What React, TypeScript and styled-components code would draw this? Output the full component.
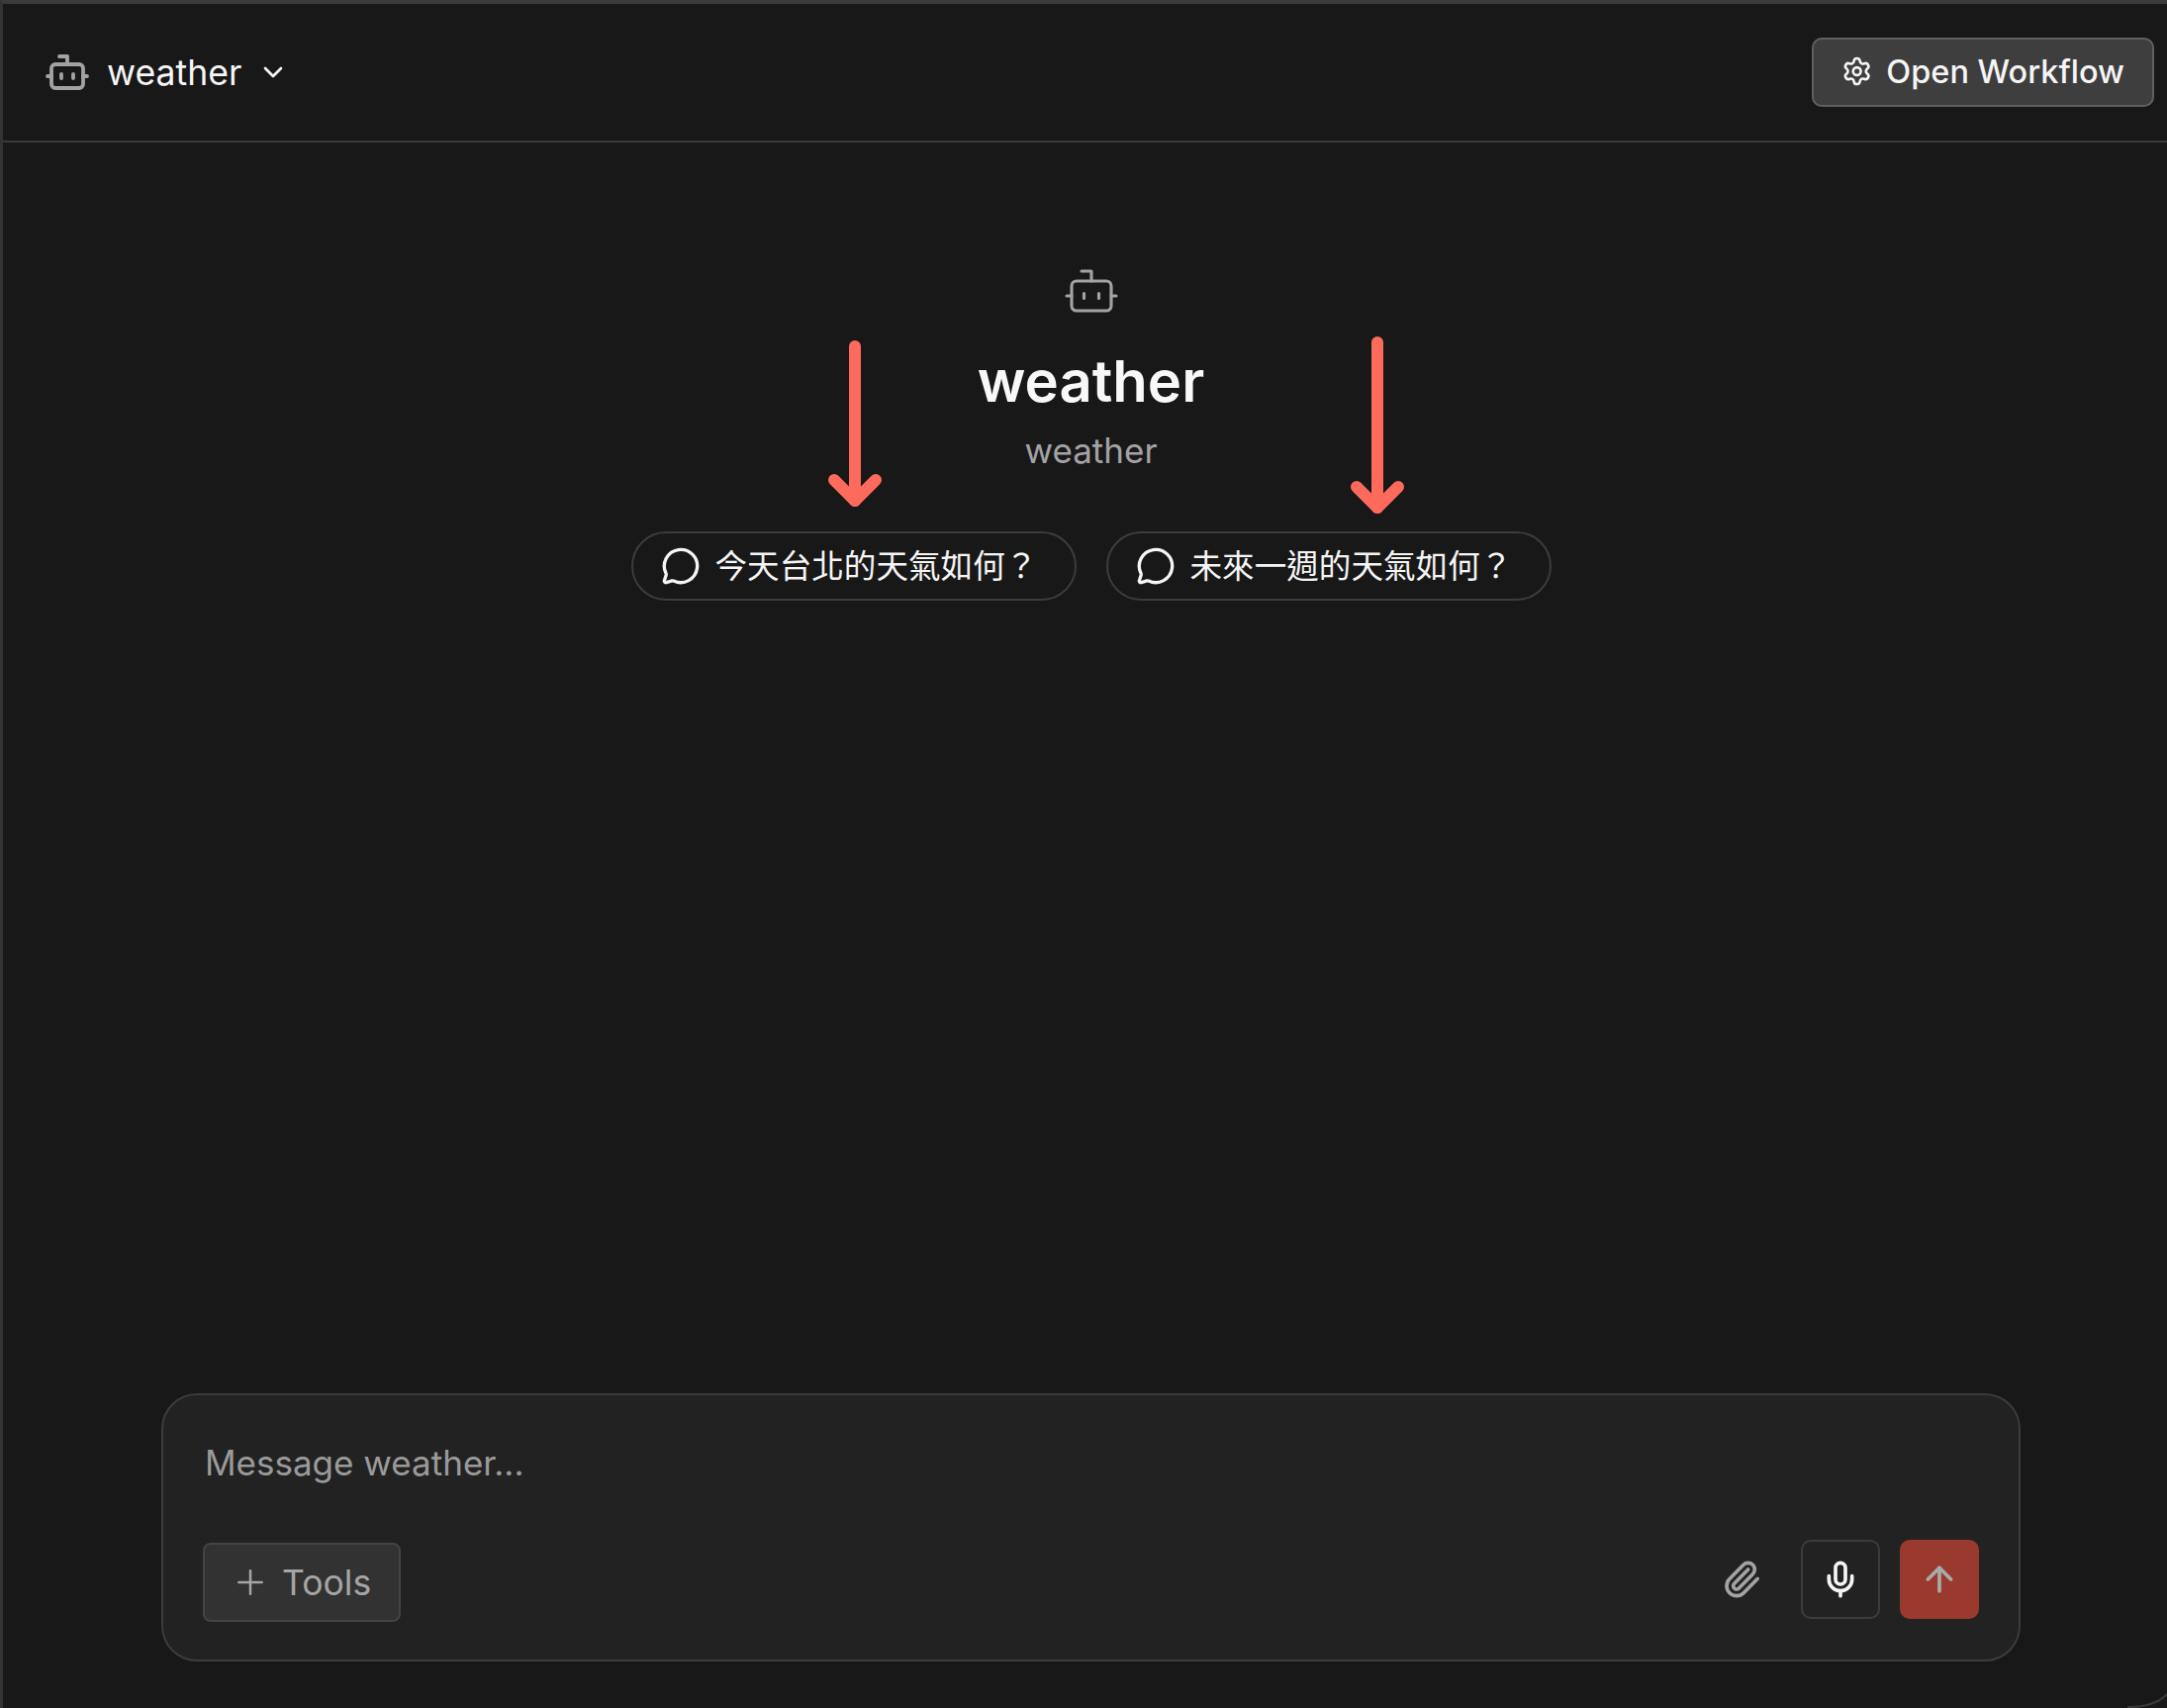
import React from "react";
import styled, { createGlobalStyle } from "styled-components";
import {
  ArrowUp,
  Bot,
  ChevronDown,
  MessageCircle,
  Mic,
  Paperclip,
  Plus,
  Settings,
} from "lucide-react";

const GlobalStyle = createGlobalStyle`
  html, body {
    margin: 0;
    padding: 0;
    background: #181818;
  }
  * {
    box-sizing: border-box;
  }
`;

const Page = styled.div`
  display: flex;
  flex-direction: column;
  width: 2190px;
  height: 1726px;
  overflow: hidden;
  position: relative;
  background: #181818;
  border-top: 4px solid #3a3a3a;
  border-left: 3px solid #333;
  font-family: Inter, "Noto Sans CJK TC", sans-serif;
  color: #f5f5f5;
`;

const Header = styled.header`
  display: flex;
  align-items: center;
  justify-content: space-between;
  height: 140px;
  flex-shrink: 0;
  padding: 0 13px 0 41px;
  border-bottom: 2px solid #3a3a3a;
`;

const AgentPicker = styled.div`
  display: flex;
  align-items: center;
  font-size: 35.6px;
  svg.bot {
    color: #a3a3a3;
    margin-right: 16px;
  }
  svg.chevron {
    margin-left: 16px;
  }
`;

const OpenButton = styled.button`
  display: flex;
  align-items: center;
  gap: 14px;
  width: 346px;
  height: 70px;
  padding: 0 28px 2px;
  background: #3e3e3e;
  border: 2px solid #606060;
  border-radius: 10px;
  color: #f5f5f5;
  font: inherit;
  font-size: 32.5px;
  font-weight: 500;
  white-space: nowrap;
`;

const Main = styled.main`
  flex: 1;
  display: flex;
  flex-direction: column;
  align-items: center;
  padding: 0 148px 47px 160px;
`;

const Hero = styled.div`
  flex: 1;
  display: flex;
  flex-direction: column;
  align-items: center;
  padding-top: 120px;
  svg.bot {
    color: #a3a3a3;
  }
`;

const Title = styled.h1`
  margin: 25px 0 0;
  font-size: 58px;
  line-height: 72px;
  font-weight: 600;
  color: #f8f8f8;
`;

const Subtitle = styled.p`
  margin: 12px 0 0;
  font-size: 35px;
  line-height: 44px;
  color: #a3a3a3;
`;

const Suggestions = styled.div`
  display: flex;
  gap: 30px;
  margin-top: 60px;
`;

const Suggestion = styled.button`
  display: flex;
  align-items: center;
  gap: 15px;
  width: 450px;
  height: 70px;
  padding: 0 0 0 28px;
  background: transparent;
  border: 2px solid #3c3c3c;
  border-radius: 35px;
  color: #f5f5f5;
  font: inherit;
  font-size: 32.6px;
  white-space: nowrap;
`;

const SuggestionLabel = styled.span`
  padding-bottom: 5px;
`;

const Composer = styled.div`
  width: 1879px;
  height: 271px;
  display: flex;
  flex-direction: column;
  justify-content: space-between;
  padding: 46px 40px 41px 40px;
  background: #222222;
  border: 2px solid #3c3c3c;
  border-radius: 36px;
`;

const Placeholder = styled.div`
  padding-left: 2px;
  font-size: 35px;
  line-height: 44px;
  color: #9a9a9a;
`;

const ComposerRow = styled.div`
  display: flex;
  align-items: flex-end;
  justify-content: space-between;
`;

const ToolsButton = styled.button`
  display: flex;
  align-items: center;
  gap: 12px;
  width: 200px;
  height: 80px;
  padding: 0 0 0 26px;
  margin-bottom: -3px;
  background: #323232;
  border: 2px solid #444;
  border-radius: 8px;
  color: #a5a5a5;
  font: inherit;
  font-size: 35.6px;
`;

const Actions = styled.div`
  display: flex;
  align-items: center;
  gap: 20px;
`;

const AttachButton = styled.div`
  display: flex;
  align-items: center;
  justify-content: center;
  width: 80px;
  height: 80px;
  color: #a3a3a3;
`;

const IconButton = styled.button<{ $send?: boolean }>`
  display: flex;
  align-items: center;
  justify-content: center;
  width: 80px;
  height: 80px;
  padding: 0;
  border-radius: 10px;
  border: ${(p) => (p.$send ? "none" : "2px solid #3c3c3c")};
  background: ${(p) => (p.$send ? "#9a3a2e" : "#222222")};
  color: ${(p) => (p.$send ? "#aaaaaa" : "#f5f5f5")};
`;

const ArrowMark = styled.svg<{ $left: number; $top: number }>`
  position: absolute;
  left: ${(p) => p.$left}px;
  top: ${(p) => p.$top}px;
  fill: none;
  stroke: #fe6a5b;
  stroke-width: 12;
  stroke-linecap: round;
  stroke-linejoin: round;
`;

const CornerEdge = styled.svg`
  position: absolute;
  right: 0;
  bottom: 0;
  fill: none;
  stroke: #3a3a3a;
  stroke-width: 2;
`;

// red annotation arrows lying over the page
const DownArrow = ({ left, top, length }: { left: number; top: number; length: number }) => (
  <ArrowMark $left={left} $top={top} width={56} height={length + 14} viewBox={`0 0 56 ${length + 14}`}>
    <path d={`M28 7V${length + 7}`} />
    <path d={`M7 ${length - 14}L28 ${length + 7}L49 ${length - 14}`} />
  </ArrowMark>
);

const App = () => {
  return (
    <Page>
      <GlobalStyle />
      <Header>
        <AgentPicker>
          <Bot className="bot" size={48} strokeWidth={1.9} />
          <span>weather</span>
          <ChevronDown className="chevron" size={32} strokeWidth={2} />
        </AgentPicker>
        <OpenButton>
          <Settings size={32} strokeWidth={2} />
          Open Workflow
        </OpenButton>
      </Header>
      <Main>
        <Hero>
          <Bot className="bot" size={60} strokeWidth={1.25} />
          <Title>weather</Title>
          <Subtitle>weather</Subtitle>
          <Suggestions>
            <Suggestion>
              <MessageCircle size={40} strokeWidth={2} />
              <SuggestionLabel>今天台北的天氣如何？</SuggestionLabel>
            </Suggestion>
            <Suggestion>
              <MessageCircle size={40} strokeWidth={2} />
              <SuggestionLabel>未來一週的天氣如何？</SuggestionLabel>
            </Suggestion>
          </Suggestions>
        </Hero>
        <Composer>
          <Placeholder>Message weather...</Placeholder>
          <ComposerRow>
            <ToolsButton>
              <Plus size={40} strokeWidth={1.5} />
              Tools
            </ToolsButton>
            <Actions>
              <AttachButton>
                <Paperclip size={40} strokeWidth={2.2} />
              </AttachButton>
              <IconButton>
                <Mic size={40} strokeWidth={2.2} />
              </IconButton>
              <IconButton $send>
                <ArrowUp size={40} strokeWidth={2.2} />
              </IconButton>
            </Actions>
          </ComposerRow>
        </Composer>
      </Main>
      <DownArrow left={833} top={339} length={156} />
      <DownArrow left={1361} top={335} length={167} />
      <CornerEdge width={40} height={16} viewBox="0 0 40 16">
        <path d="M0 15C12 15 30 13 40 2" />
      </CornerEdge>
    </Page>
  );
};

export default App;
